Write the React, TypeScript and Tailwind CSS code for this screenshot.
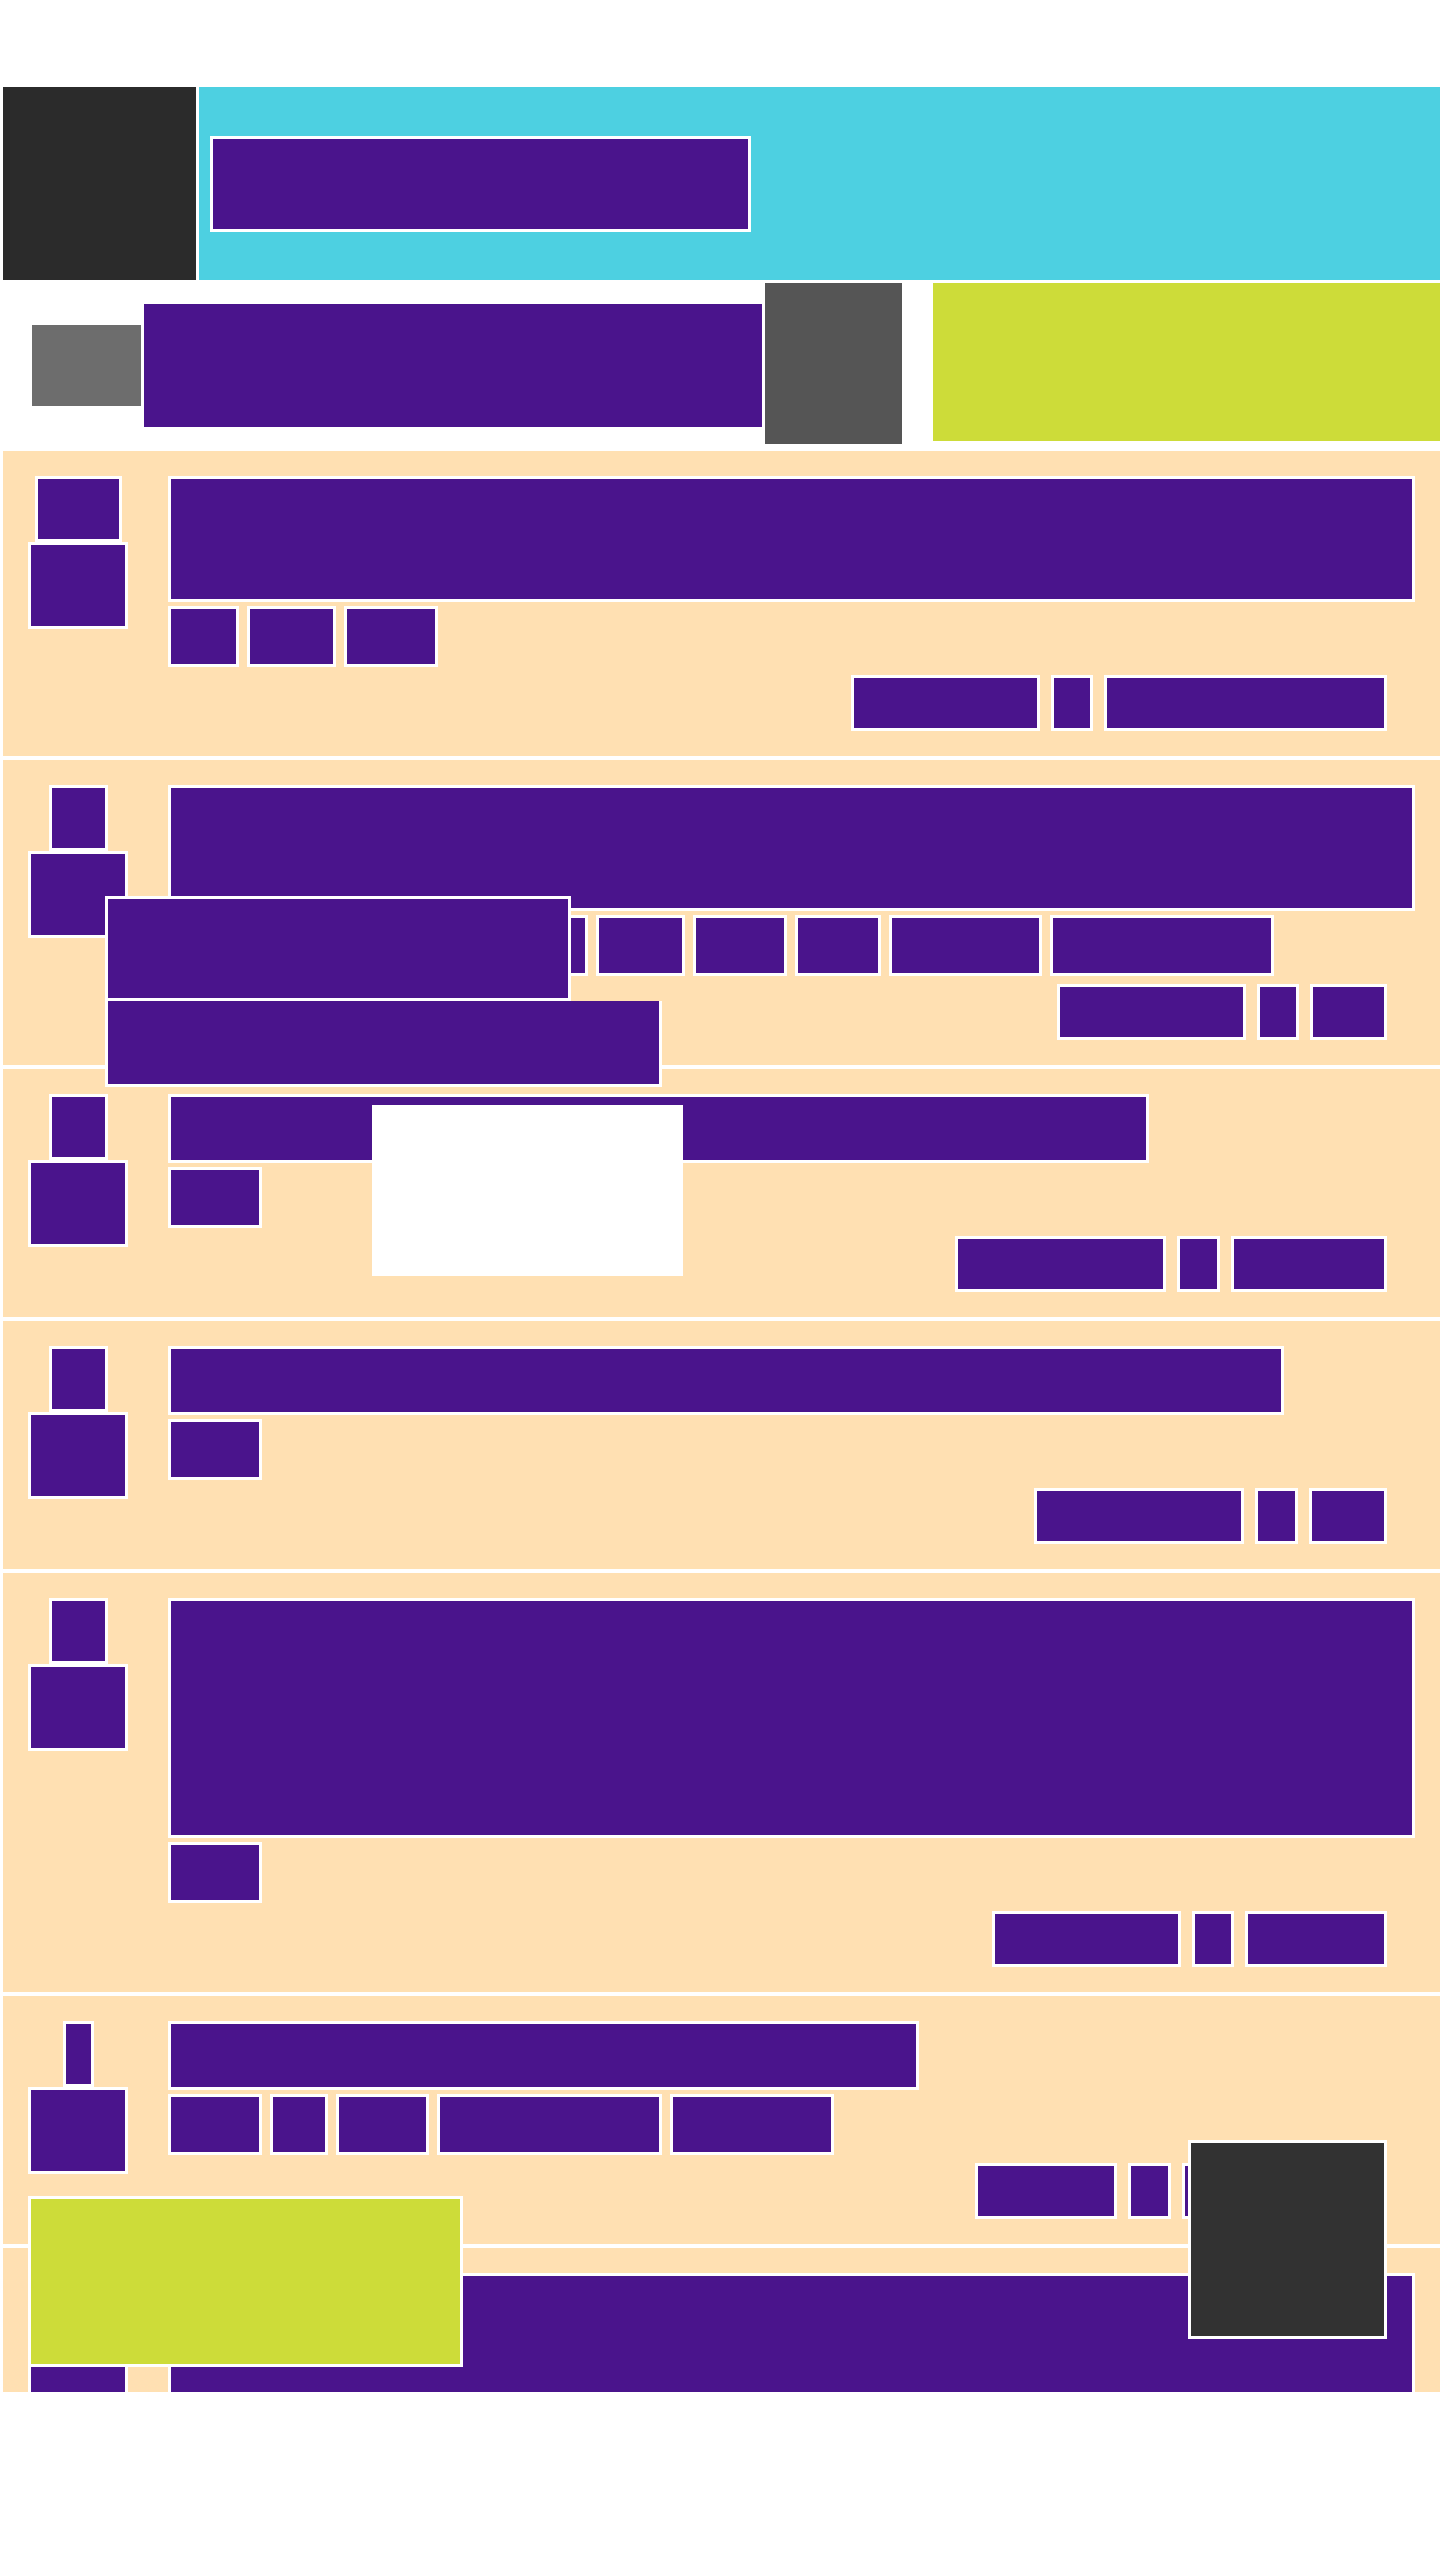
import React from "react";

type Card = {
  avatar: string;
  title: string;
  titleH: string;
  tags: string[];
  actions: string[];
};

const box = "border-[3px] border-white bg-[#4a148c]";

const cards: Card[] = [
  {
    avatar: "w-[87px]",
    title: "w-full",
    titleH: "h-[126px]",
    tags: ["w-[71px]", "w-[89px]", "w-[94px]"],
    actions: ["w-[189px]", "w-[42px]", "w-[283px]"],
  },
  {
    avatar: "w-[59px]",
    title: "w-full",
    titleH: "h-[126px]",
    tags: ["w-[94px]", "w-[110px]", "w-[92px]", "w-[100px]", "w-[89px]", "w-[94px]", "w-[86px]", "w-[153px]", "w-[224px]"],
    actions: ["w-[189px]", "w-[42px]", "w-[77px]"],
  },
  {
    avatar: "w-[59px]",
    title: "w-[981px]",
    titleH: "h-[69px]",
    tags: ["w-[94px]"],
    actions: ["w-[211px]", "w-[43px]", "w-[156px]"],
  },
  {
    avatar: "w-[59px]",
    title: "w-[1116px]",
    titleH: "h-[69px]",
    tags: ["w-[94px]"],
    actions: ["w-[210px]", "w-[43px]", "w-[78px]"],
  },
  {
    avatar: "w-[59px]",
    title: "w-full",
    titleH: "h-[240px]",
    tags: ["w-[94px]"],
    actions: ["w-[189px]", "w-[42px]", "w-[142px]"],
  },
  {
    avatar: "w-[31px]",
    title: "w-[751px]",
    titleH: "h-[69px]",
    tags: ["w-[94px]", "w-[58px]", "w-[93px]", "w-[225px]", "w-[164px]"],
    actions: ["w-[142px]", "w-[43px]", "w-[205px]"],
  },
  {
    avatar: "w-[59px]",
    title: "w-full",
    titleH: "h-[126px]",
    tags: ["w-[94px]"],
    actions: ["w-[189px]", "w-[42px]", "w-[142px]"],
  },
];

function FeedCard({ card, index }: { card: Card; index: number }) {
  return (
    <article className="relative flex shrink-0 bg-[#ffe0b2] py-[25px] pl-[25px] pr-[25px]">
      <div className="flex w-[100px] shrink-0 flex-col items-center">
        <div className={`h-[66px] ${card.avatar} ${box}`} />
        <div className={`h-[87px] w-[100px] ${box}`} />
      </div>
      <div className="ml-[40px] flex min-w-0 flex-1 flex-col">
        <div className={`${card.title} ${card.titleH} ${box}`} />
        <div className="mt-[4px] flex gap-[8px]">
          {card.tags.map((t, i) => (
            <span key={i} className={`h-[61px] ${t} ${box}`} />
          ))}
        </div>
        <div className="mt-[8px] flex justify-end gap-[11px] pr-[28px]">
          {card.actions.map((a, i) => (
            <button key={i} className={`h-[56px] ${a} ${box}`} />
          ))}
        </div>
      </div>

      {index === 1 && (
        <div className="absolute left-[102px] top-[136px] z-10 flex flex-col">
          <div className={`h-[105px] w-[466px] ${box}`} />
          <div className={`h-[86px] w-[557px] border-t-0 ${box}`} />
        </div>
      )}
      {index === 2 && (
        <div className="absolute left-[369px] top-[36px] z-10 h-[171px] w-[311px] bg-white" />
      )}
      {index === 5 && (
        <>
          <div className="absolute left-[25px] top-[200px] z-10 h-[171px] w-[435px] border-[3px] border-white bg-[#cddc39]" />
          <div className="absolute left-[1185px] top-[144px] z-10 h-[199px] w-[199px] border-[3px] border-white bg-[#323232]" />
        </>
      )}
    </article>
  );
}

export default function App() {
  return (
    <div className="min-h-[2560px] w-[1440px] bg-white pl-[3px] pt-[87px]">
      <header>
        <div className="flex h-[193px] gap-[3px]">
          <div className="w-[193px] bg-[#2b2b2b]" />
          <div className="flex flex-1 items-center bg-[#4dd0e1] pl-[11px]">
            <div className={`h-[96px] w-[541px] ${box}`} />
          </div>
        </div>
        <div className="flex h-[171px]">
          <div className="ml-[29px] h-[81px] w-[109px] self-center bg-[#6d6d6d]" />
          <div className="ml-[3px] h-[123px] w-[618px] self-center bg-[#4a148c]" />
          <div className="ml-[3px] mt-[3px] h-[161px] w-[137px] bg-[#555555]" />
          <div className="ml-[31px] mt-[3px] h-[158px] flex-1 bg-[#cddc39]" />
        </div>
      </header>
      <main className="flex h-[1941px] flex-col gap-[4px] overflow-hidden">
        {cards.map((c, i) => (
          <FeedCard key={i} card={c} index={i} />
        ))}
      </main>
    </div>
  );
}
